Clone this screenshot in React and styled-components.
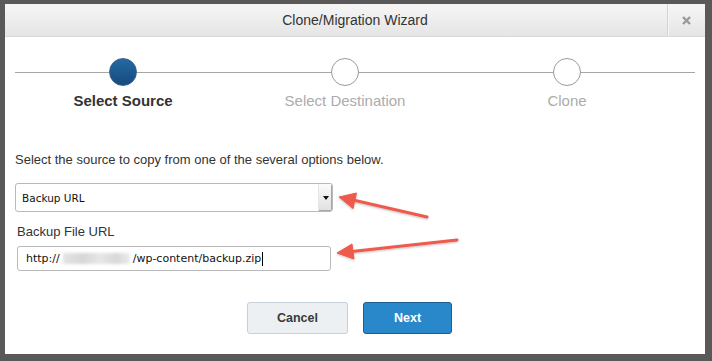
import React from "react";
import styled, { createGlobalStyle } from "styled-components";

const GlobalStyle = createGlobalStyle`
  html, body {
    margin: 0;
    padding: 0;
    background: #595959;
  }
  body {
    font-family: "Liberation Sans", Arial, sans-serif;
  }
`;

const Page = styled.div`
  position: relative;
  width: 712px;
  height: 361px;
  padding: 4px 7px 7px 5px;
  box-sizing: border-box;
  background: #595959;
  overflow: hidden;
`;

const Modal = styled.div`
  width: 700px;
  height: 350px;
  background: #fff;
  display: flex;
  flex-direction: column;
`;

const Header = styled.div`
  height: 33px;
  display: grid;
  grid-template-columns: 38px 1fr 38px;
  align-items: stretch;
  background: linear-gradient(#f6f6f6, #e5e5e5);
  border-bottom: 1px solid #dadada;
  box-sizing: border-box;
`;

const Title = styled.div`
  grid-column: 2;
  display: flex;
  align-items: center;
  justify-content: center;
  font-size: 14px;
  color: #333;
`;

const Close = styled.div`
  grid-column: 3;
  display: flex;
  align-items: center;
  justify-content: center;
  border-left: 1px solid #d2d2d2;
  box-shadow: inset 1px 0 #f7f7f7;
`;

const Body = styled.div`
  padding: 21px 0 0 10px;
  display: flex;
  flex-direction: column;
`;

const Stepper = styled.div`
  position: relative;
  display: grid;
  grid-template-columns: repeat(3, 222px);
  margin-left: -3px;

  &::before {
    content: "";
    position: absolute;
    top: 14px;
    left: 3px;
    width: 680px;
    height: 1px;
    background: #a6a6a6;
  }
`;

const Step = styled.div`
  position: relative;
  display: flex;
  flex-direction: column;
  align-items: center;
  gap: 6px;
`;

const Dot = styled.div`
  width: 28px;
  height: 28px;
  border-radius: 50%;
  box-sizing: border-box;
  border: 1px solid ${(p) => (p.$active ? "#3b6288" : "#9a9a9a")};
  background: ${(p) =>
    p.$active ? "linear-gradient(#2569a4, #154a7d)" : "#fff"};
`;

const StepLabel = styled.div`
  font-size: 15px;
  line-height: 17px;
  font-weight: ${(p) => (p.$active ? 700 : 400)};
  color: ${(p) => (p.$active ? "#333" : "#acacac")};
`;

const Intro = styled.p`
  margin: 43px 0 0;
  font-size: 13px;
  line-height: 16px;
  color: #333;
`;

const Select = styled.div`
  margin-top: 15px;
  width: 318px;
  height: 29px;
  box-sizing: border-box;
  border: 1px solid #b9b9b9;
  border-radius: 3px;
  display: flex;
  overflow: hidden;
  font-family: "DejaVu Sans", Verdana, sans-serif;
  font-size: 10.5px;
  color: #111;
`;

const SelectValue = styled.div`
  flex: 1;
  display: flex;
  align-items: center;
  padding-left: 6px;
`;

const SelectArrow = styled.div`
  width: 13px;
  display: flex;
  align-items: center;
  justify-content: center;
  background: linear-gradient(#fbfbfb, #e0e0e0);
  border-left: 1px solid #e6e6e6;
  box-shadow: inset -1px -1px #a8a8a8;

  &::after {
    content: "";
    border-left: 3px solid transparent;
    border-right: 3px solid transparent;
    border-top: 4px solid #111;
  }
`;

const FieldLabel = styled.label`
  margin: 12px 0 0 2px;
  font-size: 13px;
  line-height: 16px;
  color: #333;
`;

const Input = styled.div`
  margin: 6px 0 0 2px;
  width: 314px;
  height: 25px;
  box-sizing: border-box;
  border: 1px solid #b9b9b9;
  border-radius: 3px;
  display: flex;
  align-items: center;
  padding-left: 8px;
  font-family: "DejaVu Sans", Verdana, sans-serif;
  font-size: 11px;
  color: #111;
  white-space: nowrap;
`;

const Blurred = styled.span`
  display: inline-block;
  width: 67px;
  height: 11px;
  margin: 0 3px 0 3px;
  background: linear-gradient(90deg, #e4e4e4, #d6d6d6 30%, #e6e6e6 55%, #d8d8d8 80%, #ececec);
  filter: blur(1.5px);
`;

const Caret = styled.span`
  display: inline-block;
  width: 1px;
  height: 14px;
  margin-left: 1px;
  background: #000;
`;

const Actions = styled.div`
  margin-top: 31px;
  padding-right: 21px;
  display: flex;
  justify-content: center;
  gap: 15px;
`;

const Button = styled.button`
  height: 32px;
  width: ${(p) => p.$w}px;
  border-radius: 3px;
  font-family: "Liberation Sans", Arial, sans-serif;
  font-size: 12.5px;
  font-weight: 700;
  border: 1px solid ${(p) => (p.$primary ? "#1c5d92" : "#c6d0da")};
  background: ${(p) => (p.$primary ? "#2888c9" : "#edf0f3")};
  color: ${(p) => (p.$primary ? "#fff" : "#3a3a3a")};
`;

const Annotations = styled.svg`
  position: absolute;
  left: 0;
  top: 0;
  pointer-events: none;
`;

const steps = [
  { label: "Select Source", active: true },
  { label: "Select Destination" },
  { label: "Clone" },
];

export default function App() {
  return (
    <Page>
      <GlobalStyle />
      <Modal>
        <Header>
          <Title>Clone/Migration Wizard</Title>
          <Close>
            <svg width="9" height="9" viewBox="0 0 9 9">
              <path d="M1 1L8 8M8 1L1 8" stroke="#9a9a9a" strokeWidth="2.4" />
            </svg>
          </Close>
        </Header>
        <Body>
          <Stepper>
            {steps.map((s) => (
              <Step key={s.label}>
                <Dot $active={s.active} />
                <StepLabel $active={s.active}>{s.label}</StepLabel>
              </Step>
            ))}
          </Stepper>
          <Intro>Select the source to copy from one of the several options below.</Intro>
          <Select>
            <SelectValue>Backup URL</SelectValue>
            <SelectArrow />
          </Select>
          <FieldLabel>Backup File URL</FieldLabel>
          <Input>
            http://<Blurred />/wp-content/backup.zip<Caret />
          </Input>
          <Actions>
            <Button $w={101}>Cancel</Button>
            <Button $w={89} $primary>
              Next
            </Button>
          </Actions>
        </Body>
      </Modal>
      <Annotations width="712" height="361" viewBox="0 0 712 361">
        <defs>
          <filter id="sh" x="-20%" y="-20%" width="140%" height="140%">
            <feDropShadow dx="0" dy="1" stdDeviation="1" floodColor="#000" floodOpacity="0.25" />
          </filter>
        </defs>
        <g fill="#ee5a4c" stroke="#ee5a4c" filter="url(#sh)">
          <line x1="427" y1="217" x2="353" y2="200" strokeWidth="3" strokeLinecap="round" />
          <polygon points="339,197 356.5,193 353,208.5" strokeWidth="1" strokeLinejoin="round" />
          <line x1="457" y1="240" x2="352" y2="251.5" strokeWidth="3" strokeLinecap="round" />
          <polygon points="337,253 352,244 354,259" strokeWidth="1" strokeLinejoin="round" />
        </g>
      </Annotations>
    </Page>
  );
}
